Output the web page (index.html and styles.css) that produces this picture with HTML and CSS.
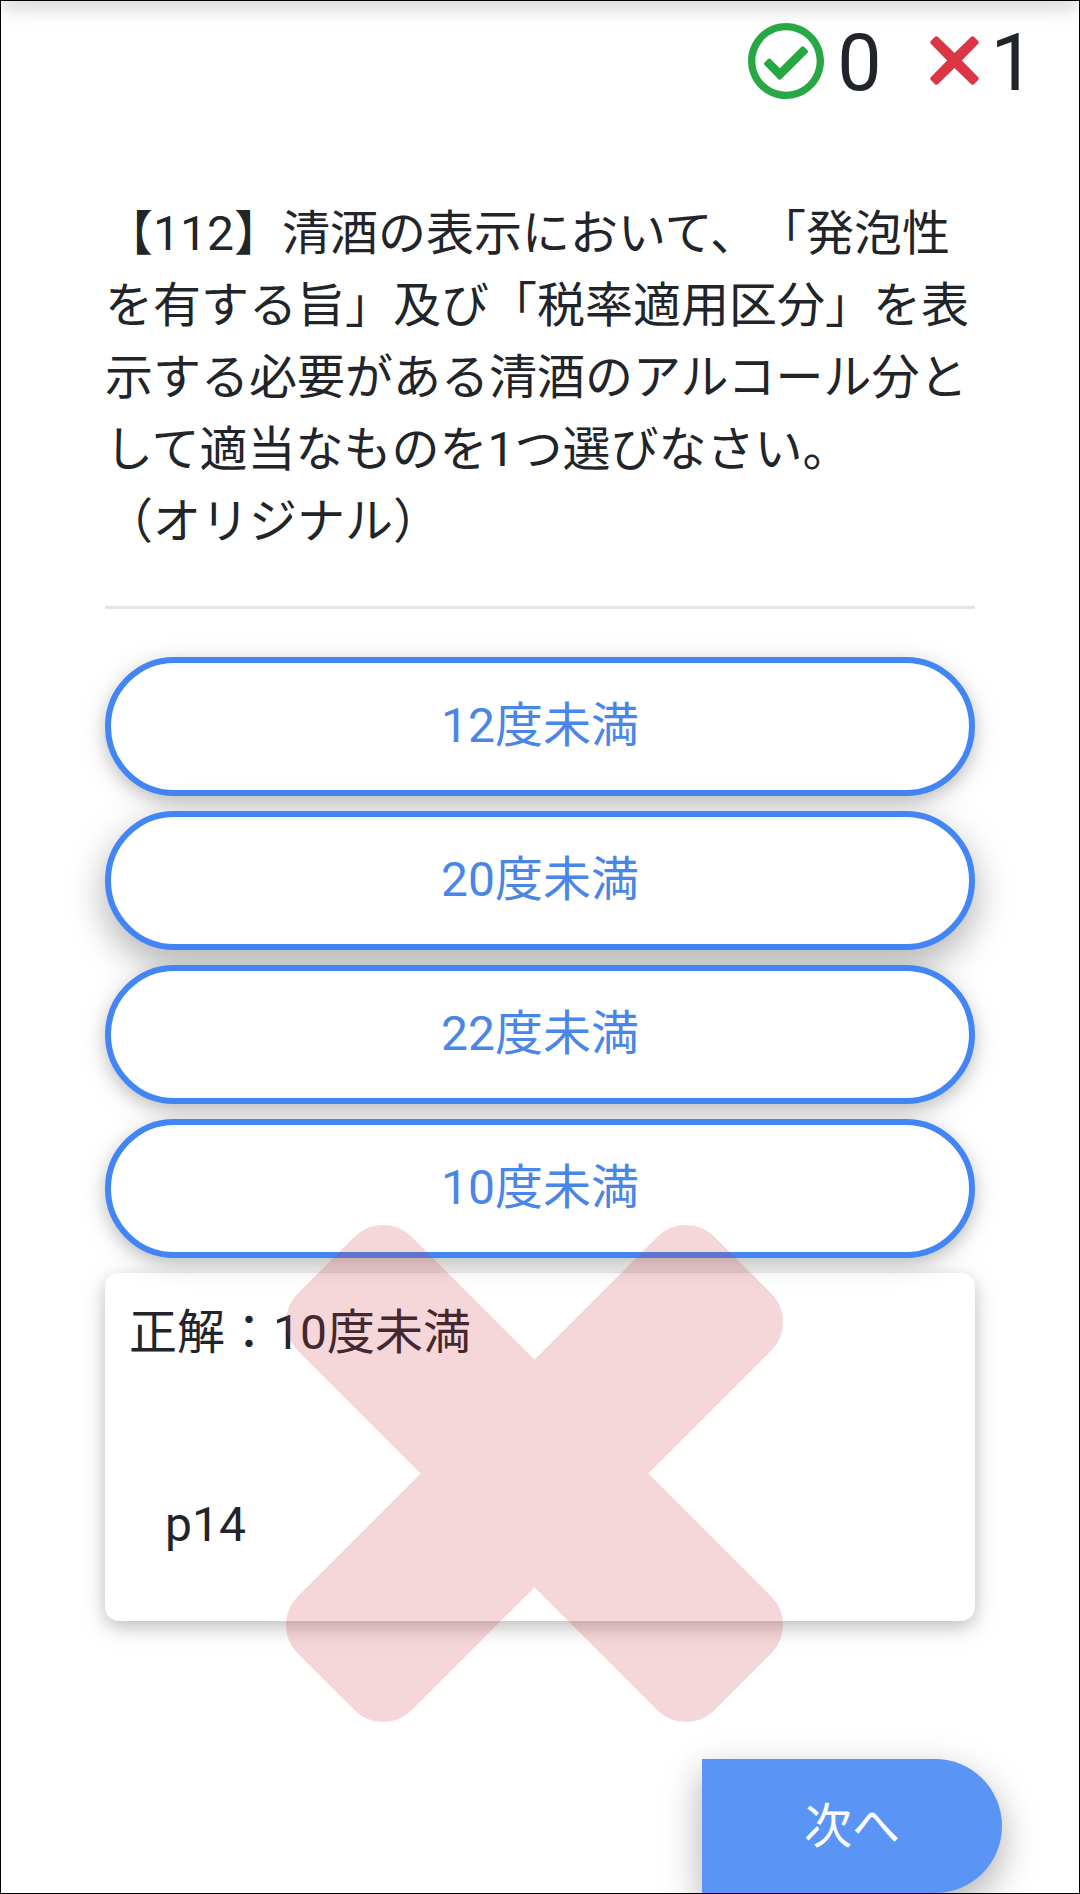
FILE: index.html
```html
<!DOCTYPE html>
<html lang="ja">

<head>
    <meta charset="utf-8">
    <title>クイズ</title>
    <link rel="stylesheet" href="styles.css">
</head>

<body>
    <div class="screen">
        <div class="topbar"></div>

        <!-- Score -->
        <div class="score">
            <svg class="icon-check" viewBox="8 8 496 496">
                <path fill="#28a745" d="M256 8C119.033 8 8 119.033 8 256s111.033 248 248 248 248-111.033 248-248S392.967 8 256 8zm0 48c110.532 0 200 89.451 200 200 0 110.532-89.451 200-200 200-110.532 0-200-89.451-200-200 0-110.532 89.451-200 200-200m140.204 130.267l-22.536-22.718c-4.667-4.705-12.265-4.736-16.97-.068L215.346 303.697l-59.792-60.277c-4.667-4.705-12.265-4.736-16.97-.069l-22.719 22.536c-4.705 4.667-4.736 12.265-.068 16.971l90.781 91.516c4.667 4.705 12.265 4.736 16.97.068l172.589-171.204c4.704-4.668 4.734-12.266.067-16.971z"/>
            </svg>
            <span class="score-num ok-num">0</span>
            <svg class="icon-times" viewBox="0 0 49 49">
                <path fill="#dc3545" d="M24.5 17.1L41.2 .8q1.4-1.2 2.8 0L48.2 5q1.2 1.4 0 2.8L31.9 24.5 48.2 41.2q1.2 1.4 0 2.8L44 48.2q-1.4 1.2-2.8 0L24.5 31.9 7.8 48.2q-1.4 1.2-2.8 0L.8 44q-1.2-1.4 0-2.8L17.1 24.5.8 7.8Q-.4 6.4.8 5L5 .8Q6.4-.4 7.8.8z"/>
            </svg>
            <span class="score-num">1</span>
        </div>

        <!-- Question -->
        <div class="quiz">
            <p class="question">【112】清酒の表示において、「発泡性<br>を有する旨」及び「税率適用区分」を表<br>示する必要がある清酒のアルコール分と<br>して適当なものを1つ選びなさい。<br>（オリジナル）</p>
            <hr class="divider">

            <div class="answers">
                <button class="btn-answer">12度未満</button>
                <button class="btn-answer selected">20度未満</button>
                <button class="btn-answer">22度未満</button>
                <button class="btn-answer">10度未満</button>
            </div>

            <div class="card">
                <p class="card-answer">正解：10度未満</p>
                <p class="card-page">p14</p>
            </div>
        </div>

        <button class="btn-next">次へ</button>

        <!-- Result mark -->
        <svg class="mark" viewBox="302 366 1188 1188">
            <path fill="#cf3847" d="M1490 1322q0 40-28 68l-136 136q-28 28-68 28t-68-28l-294-294-294 294q-28 28-68 28t-68-28l-136-136q-28-28-28-68t28-68l294-294-294-294q-28-28-28-68t28-68l136-136q28-28 68-28t68 28l294 294 294-294q28-28 68-28t68 28l136 136q28 28 28 68t-28 68l-294 294 294 294q28 28 28 68z"/>
        </svg>
    </div>
</body>

</html>
```
FILE: styles.css
```css
* {
    box-sizing: border-box;
}

body {
    margin: 0;
    background: #fff;
    color: #212529;
    font-family: Roboto, "Noto Sans CJK JP", sans-serif;
    font-size: 48px;
    line-height: 72px;
    text-spacing-trim: space-all;
}

p {
    margin: 0;
}

.screen {
    position: relative;
    display: flex;
    flex-direction: column;
    height: 1894px;
    border: 1px solid #000;
    overflow: hidden;
}

.topbar {
    flex: none;
    height: 10px;
    margin-top: -10px;
    box-shadow: 0 6px 15px rgba(0, 0, 0, 0.16), 0 6px 30px rgba(0, 0, 0, 0.12);
}

.score {
    display: flex;
    justify-content: flex-end;
    align-items: center;
    height: 119px;
    padding-right: 44px;
}

.score-num {
    padding-top: 4px;
    font-size: 79px;
}

.ok-num {
    margin-right: 48px;
}

.icon-check {
    width: 76px;
    height: 76px;
    margin-right: 13px;
}

.icon-times {
    width: 49px;
    height: 49px;
    margin-right: 12px;
}

.quiz {
    padding: 78px 104px 0;
}

.question {
    white-space: nowrap;
}

.divider {
    height: 3px;
    margin: 48px 0;
    border: 0;
    background: #e3e4e6;
}

.answers {
    display: flex;
    flex-direction: column;
    gap: 15px;
}

.btn-answer {
    height: 139px;
    padding: 0 0 2px;
    border: 6px solid #4285f4;
    border-radius: 70px;
    background: #fff;
    color: #4a86e8;
    font: inherit;
    box-shadow: 0 6px 15px rgba(0, 0, 0, 0.16), 0 6px 30px rgba(0, 0, 0, 0.12);
}

.btn-answer.selected {
    box-shadow: 0 15px 33px rgba(0, 0, 0, 0.18), 0 12px 45px rgba(0, 0, 0, 0.15);
}

.card {
    height: 348px;
    margin-top: 15px;
    padding: 24px;
    border-radius: 14px;
    background: #fff;
    box-shadow: 0 6px 15px rgba(0, 0, 0, 0.16), 0 6px 30px rgba(0, 0, 0, 0.12);
}

.card-page {
    margin-top: 120px;
    padding-left: 36px;
}

.btn-next {
    flex: none;
    align-self: flex-end;
    width: 300px;
    height: 134px;
    margin-top: 138px;
    margin-right: 77px;
    padding: 1px 0 0;
    border: 0;
    border-radius: 0 67px 67px 0;
    background: #5a95f5;
    color: #fff;
    font: inherit;
    box-shadow: 0 15px 33px rgba(0, 0, 0, 0.18), 0 12px 45px rgba(0, 0, 0, 0.15);
}

/* big translucent cross laid over the answers */
.mark {
    position: absolute;
    left: 285px;
    top: 1223.5px;
    width: 497px;
    height: 497px;
    opacity: 0.2;
}
```
